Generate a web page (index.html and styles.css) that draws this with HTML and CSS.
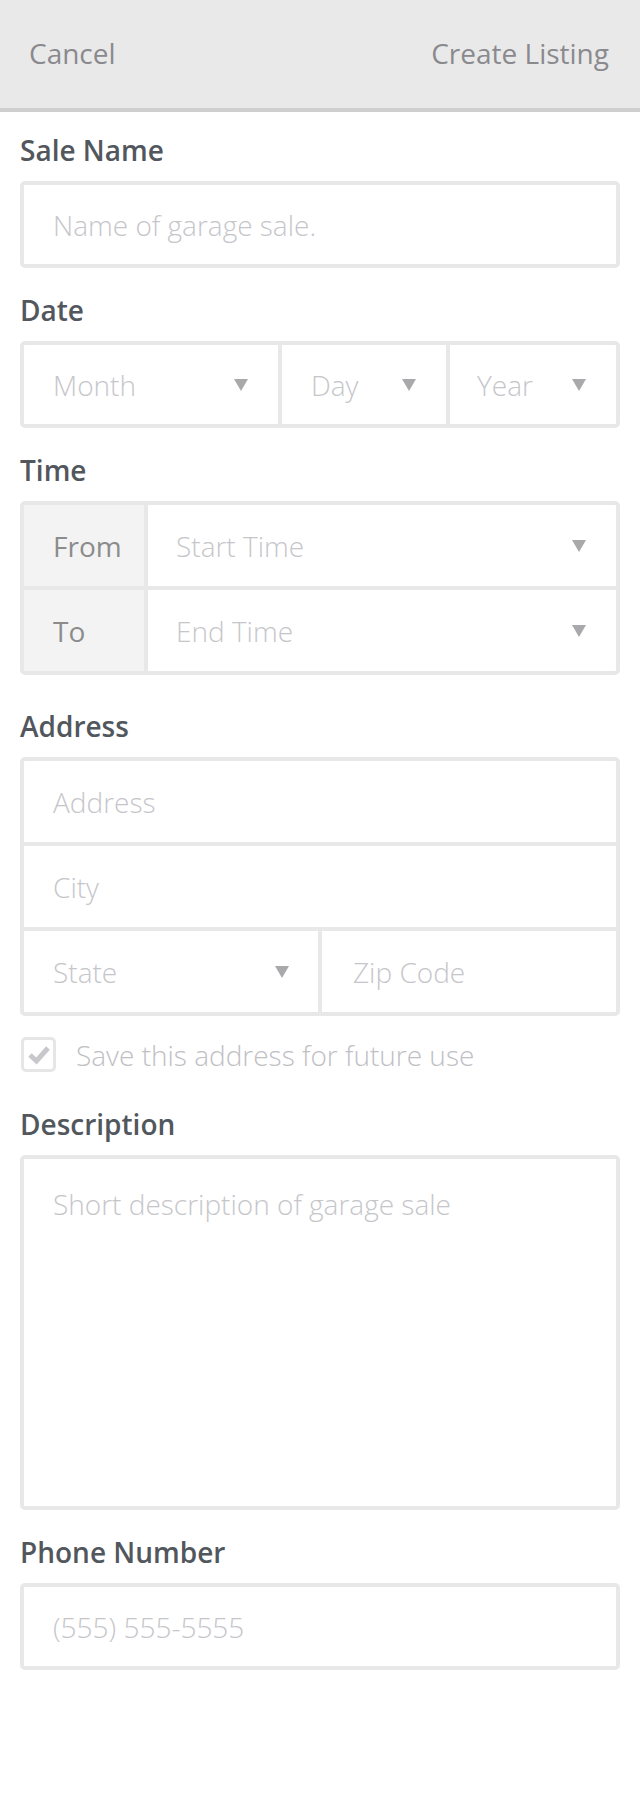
FILE: index.html
```html
<!DOCTYPE html>
<html>
<head>
<meta charset="utf-8">
<link rel="stylesheet" href="styles.css">
</head>
<body>
<header class="topbar">
  <span class="nav-btn">Cancel</span>
  <span class="nav-btn">Create Listing</span>
</header>
<main class="form">
  <section class="group">
    <div class="label">Sale Name</div>
    <div class="box">
      <div class="cell single"><span class="ph">Name of garage sale.</span></div>
    </div>
  </section>

  <section class="group">
    <div class="label">Date</div>
    <div class="box">
      <div class="row">
        <div class="cell single select month"><span class="ph">Month</span><i class="arrow"></i></div>
        <div class="cell single select day"><span class="ph">Day</span><i class="arrow"></i></div>
        <div class="cell single select year"><span class="ph">Year</span><i class="arrow"></i></div>
      </div>
    </div>
  </section>

  <section class="group">
    <div class="label">Time</div>
    <div class="box">
      <div class="row">
        <div class="cell addon">From</div>
        <div class="cell select grow"><span class="ph">Start Time</span><i class="arrow"></i></div>
      </div>
      <div class="row">
        <div class="cell addon">To</div>
        <div class="cell select grow"><span class="ph">End Time</span><i class="arrow"></i></div>
      </div>
    </div>
  </section>

  <section class="group spaced">
    <div class="label">Address</div>
    <div class="box">
      <div class="cell"><span class="ph">Address</span></div>
      <div class="cell"><span class="ph">City</span></div>
      <div class="row">
        <div class="cell select state"><span class="ph">State</span><i class="arrow"></i></div>
        <div class="cell zip"><span class="ph">Zip Code</span></div>
      </div>
    </div>
    <div class="check-row">
      <span class="checkbox">
        <svg width="24" height="20" viewBox="0 0 24 20"><polyline points="3,10 9.5,16 21,3" fill="none" stroke="#c8c8cc" stroke-width="5" stroke-linecap="butt" stroke-linejoin="miter"/></svg>
      </span>
      <span class="check-text">Save this address for future use</span>
    </div>
  </section>

  <section class="group spaced desc">
    <div class="label">Description</div>
    <div class="box textarea"><span class="ph">Short description of garage sale</span></div>
  </section>

  <section class="group">
    <div class="label">Phone Number</div>
    <div class="box">
      <div class="cell single"><span class="ph">(555) 555-5555</span></div>
    </div>
  </section>
</main>
</body>
</html>
```

FILE: styles.css
```css
* { box-sizing: border-box; }
html, body {
  margin: 0;
  padding: 0;
  background: #ffffff;
  font-family: "Open Sans", "Liberation Sans", sans-serif;
}
.topbar {
  height: 112px;
  background: #e9e9e9;
  border-bottom: 4px solid #cfcfcf;
  display: flex;
  justify-content: space-between;
  align-items: center;
  padding: 0 31px 2px 29px;
}
.nav-btn {
  font-size: 28px;
  color: #8a8a8e;
  line-height: 38px;
}
.form {
  padding: 19px 20px 120px;
}
.group + .group { margin-top: 23px; }
.group.spaced { margin-top: 32px; }
.group.spaced.desc { margin-top: 33px; }
.label {
  font-size: 28px;
  font-weight: 600;
  color: #52575d;
  line-height: 38px;
  margin-bottom: 12px;
}
.box {
  border: 4px solid #e8e8e8;
  border-radius: 5px;
  background: #e8e8e8;
  overflow: hidden;
  display: flex;
  flex-direction: column;
  gap: 4px;
}
.row {
  display: flex;
  gap: 4px;
}
.cell {
  height: 81px;
  display: flex;
  align-items: center;
  padding: 0 30px 0 29px;
  font-size: 28px;
  line-height: 38px;
  background: #fff;
}
.cell.single { height: 79px; }
.ph {
  font-weight: 300;
  color: #c6c6ca;
  white-space: nowrap;
}
.select {
  justify-content: space-between;
}
.arrow {
  display: block;
  width: 0;
  height: 0;
  border-left: 7.5px solid transparent;
  border-right: 7.5px solid transparent;
  border-top: 12px solid #a9a9ac;
}
.month { width: 254px; flex: none; }
.day { width: 164px; flex: none; }
.year { flex: 1; padding-left: 27px; }
.addon {
  width: 120px;
  flex: none;
  background: #f3f3f3;
  color: #8c8c8c;
  font-weight: 400;
}
.grow { flex: 1; padding-left: 28px; }
.state { width: 294px; flex: none; padding-right: 29px; }
.zip { flex: 1; padding-left: 31px; }
.check-row {
  display: flex;
  align-items: center;
  margin-top: 21px;
  height: 35px;
}
.checkbox {
  width: 35px;
  height: 35px;
  border: 3px solid #e6e6e6;
  border-radius: 5px;
  display: flex;
  align-items: center;
  justify-content: center;
  flex: none;
  margin-left: 1px;
}
.checkbox svg { display: block; }
.check-text {
  margin-left: 20px;
  font-size: 28px;
  font-weight: 300;
  color: #c0c0c4;
  line-height: 38px;
}
.textarea {
  display: block;
  background: #fff;
  height: 355px;
  padding: 26px 29px;
  font-size: 28px;
  line-height: 38px;
}
```
